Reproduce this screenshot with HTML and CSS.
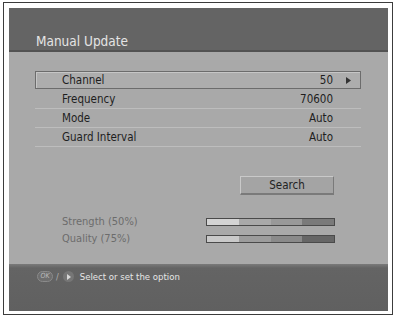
FILE: index.html
```html
<!DOCTYPE html>
<html>
<head>
<meta charset="utf-8">
<link rel="stylesheet" href="styles.css">
</head>
<body>
<div class="frame">
  <div class="screen">
    <div class="header"><span class="title">Manual Update</span></div>
    <div class="main">
      <div class="list">
        <div class="row selected"><span class="label">Channel</span><span class="value">50</span><svg class="arrow" width="5" height="7" viewBox="0 0 5 7"><path d="M0 0 L5 3.5 L0 7 Z" fill="#333"/></svg></div>
        <div class="row"><span class="label">Frequency</span><span class="value">70600</span><span class="arrow-space"></span></div>
        <div class="row"><span class="label">Mode</span><span class="value">Auto</span><span class="arrow-space"></span></div>
        <div class="row"><span class="label">Guard Interval</span><span class="value">Auto</span><span class="arrow-space"></span></div>
      </div>
      <div class="actions"><div class="button">Search</div></div>
      <div class="signal">
        <span class="sig-label">Strength (50%)</span>
        <div class="bar strength"><i></i><i></i><i></i><i></i></div>
        <span class="sig-label">Quality (75%)</span>
        <div class="bar quality"><i></i><i></i><i></i><i></i></div>
      </div>
    </div>
    <div class="footer">
      <span class="ok">OK</span>
      <span class="slash">/</span>
      <span class="circle"><svg width="4" height="6" viewBox="0 0 4 6"><path d="M0 0 L4 3 L0 6 Z" fill="#d8d8d8"/></svg></span>
      <span class="hint">Select or set the option</span>
    </div>
  </div>
</div>
</body>
</html>
```

FILE: styles.css
```css
html, body {
  margin: 0;
  padding: 0;
  background: #ffffff;
}
body {
  font-family: "DejaVu Sans Condensed", "DejaVu Sans", sans-serif;
  font-stretch: condensed;
}
.frame {
  box-sizing: border-box;
  margin: 2px 0 0 3px;
  width: 390px;
  height: 313px;
  border: 1px solid #3c3c3c;
  padding: 5px 4px 3px 5px;
  background: #ffffff;
}
.screen {
  width: 379px;
  height: 303px;
  display: flex;
  flex-direction: column;
  background: #a9a9a9;
}
.header {
  box-sizing: border-box;
  height: 44px;
  background: #646464;
  border-bottom: 2px solid #525252;
  padding: 25px 0 0 27px;
}
.title {
  color: #e4e4e4;
  font-size: 13.5px;
  line-height: 16px;
  display: block;
}
.main {
  height: 212px;
  box-sizing: border-box;
  padding: 19px 27px 0 26px;
  display: flex;
  flex-direction: column;
}
.list {
  display: flex;
  flex-direction: column;
}
.row {
  box-sizing: border-box;
  height: 19px;
  display: flex;
  align-items: center;
  padding: 0 10px 0 27px;
  border-bottom: 1px solid #bdbdbd;
  font-size: 11.5px;
  color: #1e1e1e;
}
.row.selected {
  height: 18px;
  margin-bottom: 1px;
  border: 1px solid #6c6c6c;
  background: #adadad;
  box-shadow: inset 1px 1px 0 #c6c6c6;
  padding-left: 26px;
  padding-right: 9px;
}
.label { flex: 1; }
.value { text-align: right; }
.arrow, .arrow-space {
  width: 5px;
  margin-left: 13px;
  flex: none;
}
.actions {
  display: flex;
  justify-content: flex-end;
  padding: 29px 27px 0 0;
}
.button {
  box-sizing: border-box;
  width: 94px;
  height: 19px;
  background: #a4a4a4;
  border-top: 1px solid #c9c9c9;
  border-left: 1px solid #c9c9c9;
  border-right: 1px solid #7a7a7a;
  border-bottom: 2px solid #7a7a7a;
  color: #222;
  font-size: 11.5px;
  line-height: 16px;
  text-align: center;
}
.signal {
  display: grid;
  grid-template-columns: 144px 129px;
  grid-auto-rows: 17px;
  align-items: center;
  padding: 18px 0 0 27px;
}
.sig-label {
  font-size: 11px;
  color: #6c6c6c;
}
.bar {
  box-sizing: border-box;
  height: 8px;
  border: 1px solid #4a4a4a;
  display: grid;
  grid-template-columns: repeat(4, 1fr);
}
.strength i:nth-child(1) { background: #d3d3d3; }
.strength i:nth-child(2) { background: #a9a9a9; }
.strength i:nth-child(3) { background: #999999; }
.strength i:nth-child(4) { background: #7a7a7a; }
.quality i:nth-child(1) { background: #c9c9c9; }
.quality i:nth-child(2) { background: #9c9c9c; }
.quality i:nth-child(3) { background: #8a8a8a; }
.quality i:nth-child(4) { background: #666666; }
.footer {
  flex: 1;
  background: linear-gradient(#7a7a7a 0, #646464 4px, #606060 100%);
  display: flex;
  align-items: center;
  align-self: stretch;
  padding: 2px 0 24px 28px;
  color: #e6e6e6;
}
.ok {
  box-sizing: border-box;
  width: 16px;
  height: 11px;
  border-radius: 6px;
  background: #6e6e6e;
  border: 1px solid #8a8a8a;
  color: #bdbdbd;
  font-size: 7px;
  font-style: italic;
  line-height: 9px;
  text-align: center;
}
.slash {
  color: #b0b0b0;
  font-size: 9px;
  margin: 0 4px 0 3px;
}
.circle {
  width: 11px;
  height: 11px;
  border-radius: 50%;
  background: #767676;
  display: flex;
  align-items: center;
  justify-content: center;
}
.circle svg { margin-left: 1px; }
.hint {
  margin-left: 6px;
  font-size: 9.5px;
}
```
